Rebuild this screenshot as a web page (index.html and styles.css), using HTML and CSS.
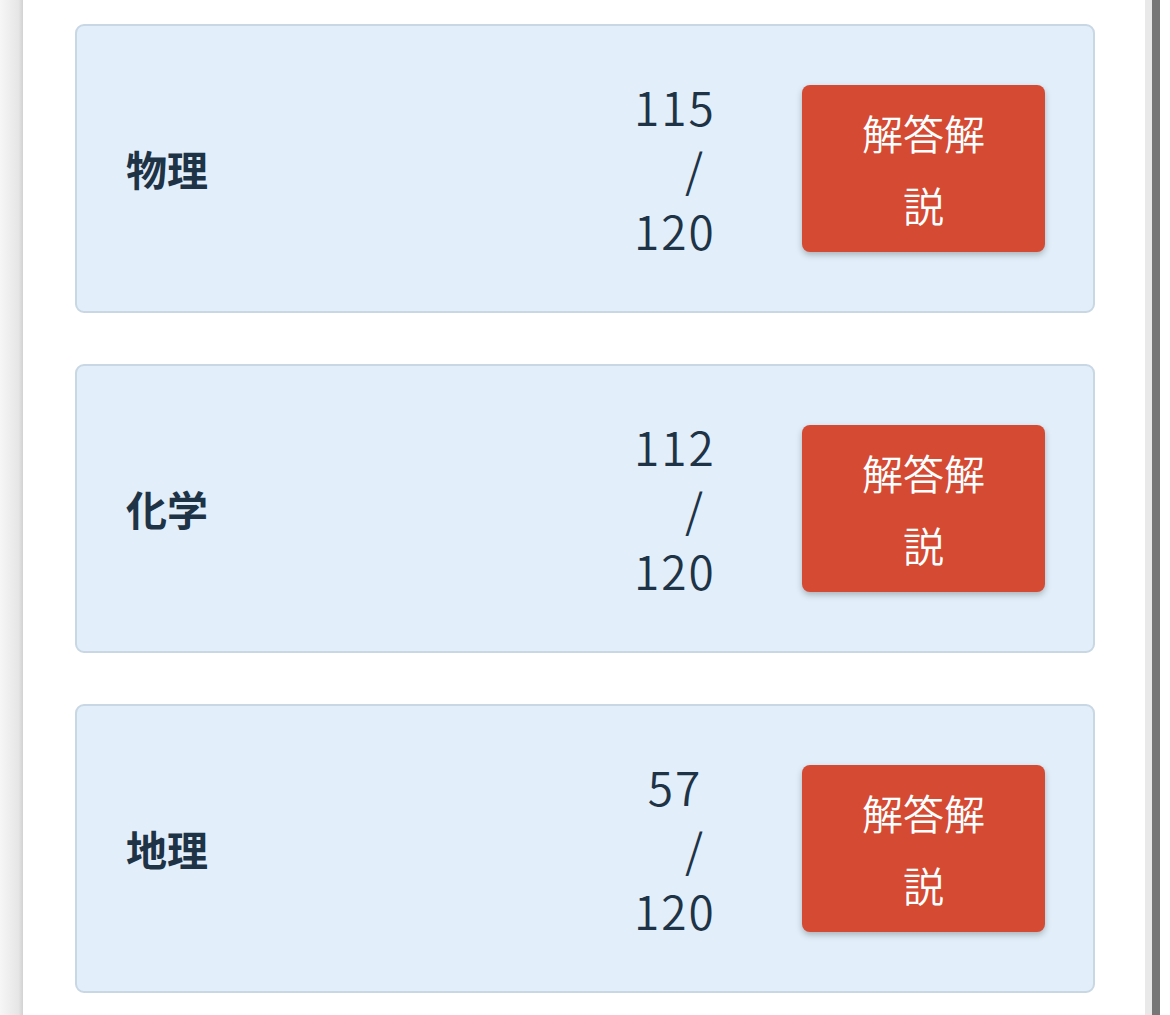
FILE: index.html
```html
<!DOCTYPE html>
<html lang="ja">
<head>
    <meta charset="UTF-8">
    <meta name="viewport" content="width=device-width, initial-scale=1.0">
    <title>成績一覧</title>
    <link rel="stylesheet" href="styles.css">
</head>
<body>

<div class="frame">
    <div class="shade"></div>

    <div class="panel">
        <!-- Subject results -->
        <div class="result-card">
            <div class="subject">物理</div>
            <div class="score">
                <span>115</span>
                <span class="sep">/</span>
                <span>120</span>
            </div>
            <button class="answer-btn">解答解説</button>
        </div>

        <div class="result-card">
            <div class="subject">化学</div>
            <div class="score">
                <span>112</span>
                <span class="sep">/</span>
                <span>120</span>
            </div>
            <button class="answer-btn">解答解説</button>
        </div>

        <div class="result-card">
            <div class="subject">地理</div>
            <div class="score">
                <span>57</span>
                <span class="sep">/</span>
                <span>120</span>
            </div>
            <button class="answer-btn">解答解説</button>
        </div>
    </div>

    <div class="edge"></div>
    <div class="scroll-thumb"></div>
    <div class="gutter"></div>
</div>

</body>
</html>
```

FILE: styles.css
```css
/* Basic styling */
body {
    margin: 0;
    font-family: "Noto Sans CJK JP", "Noto Sans", sans-serif;
    background-color: #ffffff;
    color: #1f3347;
    overflow: hidden;
}
.frame { display: flex; height: 1015px; }

/* Side strips */
.shade {
    width: 23px;
    background: linear-gradient(to right, #f6f6f6, #e6e6e6 80%, #d2d2d2);
}
.edge { width: 7px; background-color: #e9e9e9; }
.scroll-thumb { width: 8px; background-color: #777777; }
.gutter { width: 10px; background-color: #ffffff; }

/* Panel */
.panel {
    flex: 1;
    background-color: #ffffff;
    padding: 24px 50px 0 52px;
    display: flex;
    flex-direction: column;
    gap: 51px;
}

/* Result card */
.result-card {
    display: flex;
    align-items: center;
    background-color: #e2effa;
    border: 2px solid #c8d7e3;
    border-radius: 9px;
    padding: 49px 48px 50px 49px;
}
.subject {
    flex: 1;
    font-size: 41px;
    font-weight: 700;
}
.score {
    width: 120px;
    margin-right: 67px;
    display: flex;
    flex-direction: column;
    align-items: center;
    font-size: 46px;
    font-weight: 350;
    line-height: 62px;
    letter-spacing: 2px;
}
.score span { display: block; height: 62px; }
.score .sep { padding-left: 40px; }

/* Button */
.answer-btn {
    width: 243px;
    height: 167px;
    padding: 0 46px;
    background-color: #d54a33;
    color: #ffffff;
    border: none;
    border-radius: 8px;
    box-shadow: 0 3px 6px rgba(0, 0, 0, 0.25);
    font-family: inherit;
    font-size: 41px;
    font-weight: 350;
    line-height: 72px;
    cursor: pointer;
}
```
